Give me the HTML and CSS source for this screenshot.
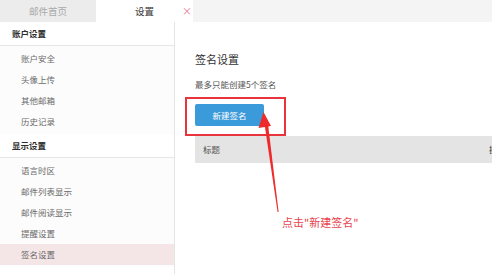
FILE: index.html
```html
<!DOCTYPE html>
<html>
    <head>
        <title>设置</title>
        <link rel="stylesheet" href="styles.css">
    </head>
    <body>

        <div class="tabs">
            <div class="tab">邮件首页</div>
            <div class="tab active">设置<span class="close">×</span></div>
            <div class="tab-rest"></div>
        </div>

        <div class="page">

            <div class="side">
                <div class="group-title">账户设置</div>
                <div class="group">
                    <div class="item">账户安全</div>
                    <div class="item">头像上传</div>
                    <div class="item">其他邮箱</div>
                    <div class="item">历史记录</div>
                </div>
                <div class="group-title">显示设置</div>
                <div class="group">
                    <div class="item">语言时区</div>
                    <div class="item">邮件列表显示</div>
                    <div class="item">邮件阅读显示</div>
                    <div class="item">提醒设置</div>
                    <div class="item current">签名设置</div>
                </div>
                <div class="group-title">通讯录设置</div>
            </div>

            <div class="main">
                <div class="title">签名设置</div>
                <div class="hint">最多只能创建5个签名</div>
                <div class="btn">新建签名</div>
                <div class="table-head">
                    <span class="col-title">标题</span>
                    <span class="col-op">操作</span>
                </div>
            </div>

        </div>

        <div class="mark-box"></div>

        <svg class="arrow" width="492" height="274" viewBox="0 0 492 274">
            <polygon points="264.5,124 268,124 278.6,212 277.6,212" fill="#ee2a2a"/>
            <polygon points="263.5,112 258.5,128 271,126" fill="#ee2a2a"/>
        </svg>

        <div class="note">点击"新建签名"</div>

    </body>
</html>
```

FILE: styles.css
```css
body {
    margin: 0;
    width: 492px;
    height: 274px;
    overflow: hidden;
    position: relative;
    background-color: #ffffff;
    font-family: "Noto Sans CJK SC", "Noto Sans", sans-serif;
}

.tabs {
    display: flex;
    height: 22px;
    background-color: #f4f4f4;
}

.tab {
    width: 96px;
    line-height: 22px;
    text-align: center;
    font-size: 9.5px;
    color: #a9a9a9;
    background-color: #ececec;
}

.tab.active {
    width: 97px;
    position: relative;
    color: #333333;
    background-color: #ffffff;
}

.close {
    position: absolute;
    left: 86px;
    top: 0;
    font-size: 10px;
    color: #e77d8e;
}

.tab-rest {
    flex: 1;
}

.page {
    display: flex;
    height: 252px;
}

.side {
    width: 174px;
    border-right: 1px solid #e4e4e4;
    background-color: #fcfcfc;
    flex-shrink: 0;
}

.group-title {
    height: 23px;
    line-height: 23px;
    padding-left: 12px;
    font-size: 8.5px;
    font-weight: bold;
    color: #2f2f2f;
    border-bottom: 1px solid #e6e6e6;
    background-color: #ffffff;
}

.group {
    padding: 2px 0;
}

.item {
    height: 21px;
    line-height: 21px;
    padding-left: 21px;
    font-size: 8.5px;
    color: #6a6a6a;
}

.item.current {
    background-color: #f4e5e6;
}

.main {
    flex: 1;
    padding-top: 29px;
    padding-left: 20px;
    overflow: hidden;
}

.title {
    font-size: 11px;
    line-height: 16px;
    color: #333333;
}

.hint {
    margin-top: 11px;
    font-size: 8.5px;
    line-height: 12px;
    color: #555555;
}

.btn {
    margin-top: 14px;
    width: 69px;
    height: 22px;
    line-height: 22px;
    text-align: center;
    font-size: 8.5px;
    color: #ffffff;
    background-color: #3b9ad9;
    border-radius: 2px;
}

.table-head {
    margin-top: 10px;
    width: 330px;
    height: 27px;
    line-height: 27px;
    display: flex;
    background-color: #e4e4e4;
    font-size: 8.5px;
    color: #555555;
}

.col-title {
    padding-left: 8px;
    width: 286px;
}

.col-op {
    color: #333333;
}

.mark-box {
    position: absolute;
    left: 185px;
    top: 97px;
    width: 97px;
    height: 35px;
    border: 2px solid #e8343c;
}

.arrow {
    position: absolute;
    left: 0;
    top: 0;
}

.note {
    position: absolute;
    left: 282px;
    top: 214px;
    font-size: 11px;
    line-height: 16px;
    color: #e8434c;
}
```
